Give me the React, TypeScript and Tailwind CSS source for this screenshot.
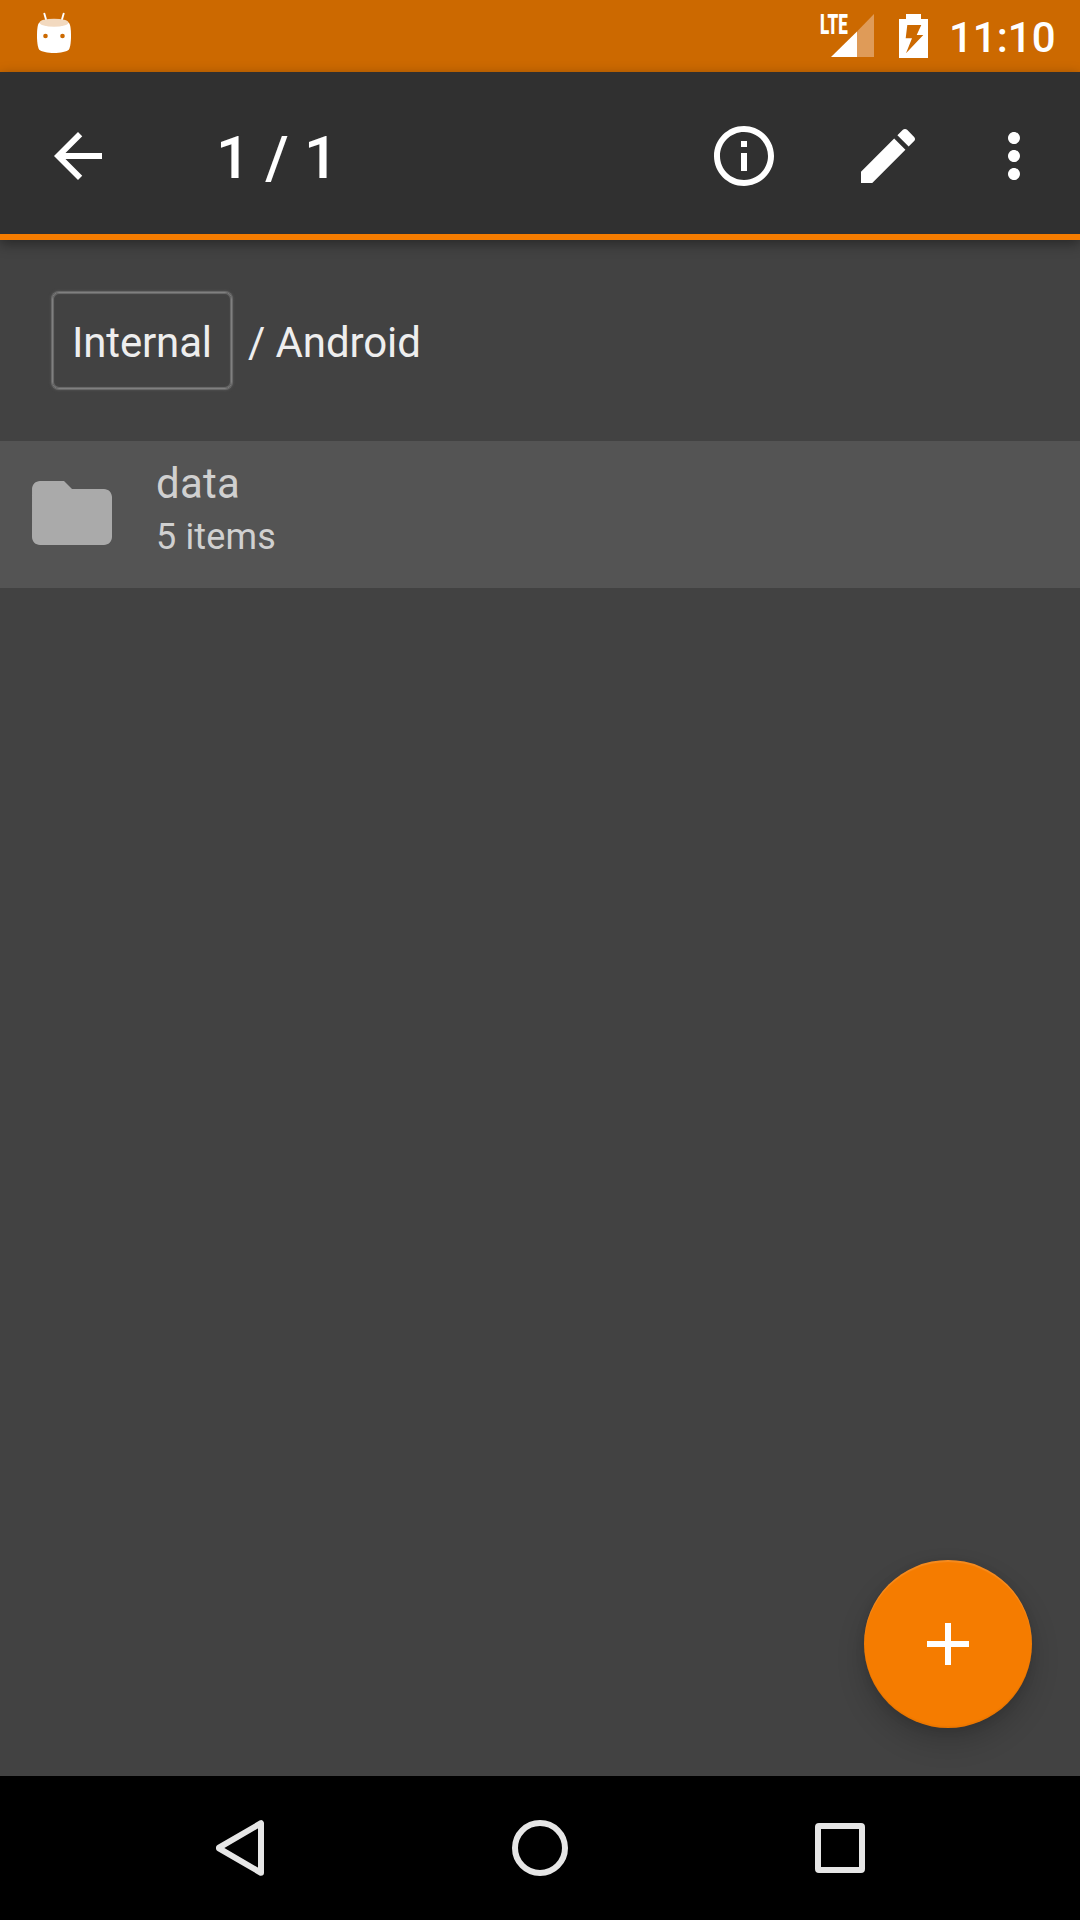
import React from 'react';

function StatusBar() {
  return (
    <div className="flex h-[72px] items-start justify-between bg-[#cc6900]">
      <svg className="ml-9 h-[72px] w-9" viewBox="36 0 36 72" fill="none">
        <path d="M44.3 13.6 46.6 21.5M63.7 13.6 61.4 21.5" stroke="#fff" strokeWidth="1.9" strokeLinecap="round" />
        <path d="M39.5 22.5C37.3 24 37 31 37 36C37 41 37.6 47 39 49.3C40.8 52 48 53 54 53C60 53 67.2 52 69 49.3C70.4 47 71 41 71 36C71 31 70.7 24 68.5 22.5Z" fill="#fff" />
        <ellipse cx="54" cy="22.7" rx="14.4" ry="4" fill="#f2d9bf" />
        <circle cx="45.5" cy="36" r="2.3" fill="#cc6900" />
        <circle cx="62.5" cy="36" r="2.3" fill="#cc6900" />
      </svg>
      <div className="flex h-[72px] pr-6">
        <span className="mt-3 -ml-px mr-px block h-[27px] w-[10px] origin-left scale-x-[0.63] whitespace-nowrap text-[27px] leading-[27px] font-black text-white">LTE</span>
        <svg className="h-[72px] w-11" viewBox="831 0 44 72">
          <path d="M857 57V31.5L874 14V57Z" fill="#df9b58" />
          <path d="M831 57 857 31.5V57Z" fill="#fff" />
        </svg>
        <svg className="ml-6 h-[72px] w-[29px]" viewBox="899 0 29 72">
          <path d="M906 14h15v5h7v39h-29V19h7ZM907.3 25l-1.6 13.3h6.3L906 53.3l17.3-18.3h-6.6l4.6-10Z" fill="#fff" fillRule="evenodd" />
        </svg>
        <span className="mt-[13px] ml-[21px] block h-[49px] w-[107px] whitespace-nowrap text-[42px] leading-[49px] font-medium text-white">11:10</span>
      </div>
    </div>
  );
}

function Icon({ d, className }: { d: string; className: string }) {
  return (
    <svg viewBox="0 0 24 24" fill="currentColor" className={className}>
      <path d={d} />
    </svg>
  );
}

function Toolbar() {
  return (
    <div className="relative z-10 flex h-[168px] items-center border-b-[6px] border-[#f57c00] bg-[#303030] pt-1.5 pr-[30px] pl-[42px] text-white shadow-[0_4px_12px_rgba(0,0,0,0.4)]">
      <Icon className="size-[72px]" d="M20 11H7.83l5.59-5.59L12 4l-8 8 8 8 1.41-1.41L7.83 13H20v-2z" />
      <span className="ml-[102px] block flex-1 pt-[3px] text-[60px] leading-[70px] font-medium tracking-[0.15px]">1 / 1</span>
      <Icon className="size-[72px]" d="M11 17h2v-6h-2v6zm1-15C6.48 2 2 6.48 2 12s4.48 10 10 10 10-4.48 10-10S17.52 2 12 2zm0 18c-4.41 0-8-3.59-8-8s3.59-8 8-8 8 3.59 8 8-3.59 8-8 8zM11 9h2V7h-2v2z" />
      <Icon className="ml-[72px] size-[72px]" d="M3 17.25V21h3.75L17.81 9.94l-3.75-3.75L3 17.25zM20.71 7.04c.39-.39.39-1.02 0-1.41l-2.34-2.34c-.39-.39-1.02-.39-1.41 0l-1.83 1.83 3.75 3.75 1.83-1.83z" />
      <Icon className="ml-[54px] size-[72px]" d="M12 8c1.1 0 2-.9 2-2s-.9-2-2-2-2 .9-2 2 .9 2 2 2zm0 2c-1.1 0-2 .9-2 2s.9 2 2 2 2-.9 2-2-.9-2-2-2zm0 6c-1.1 0-2 .9-2 2s.9 2 2 2 2-.9 2-2-.9-2-2-2z" />
    </div>
  );
}

function Breadcrumbs() {
  return (
    <div className="flex h-[201px] items-start pt-[52px] pl-[52px] text-[42px] leading-[49px] text-[#eeeeee]">
      <div className="flex h-[97px] w-[180px] items-start rounded-[7px] border border-[#808080] pt-[25px] pl-[19px] tracking-[-0.15px] shadow-[0_0_0_1px_#686868,0_0_3px_1px_#5a5a5a,inset_0_0_0_1px_#686868,inset_0_0_2px_1px_#505050]">Internal</div>
      <span className="ml-4 pt-[26px] tracking-[-0.1px] whitespace-pre">/ Android</span>
    </div>
  );
}

function FolderRow() {
  return (
    <div className="flex h-[147px] items-start bg-[#545454] pl-6 text-[#d0d0d0]">
      <Icon className="mt-6 size-24 text-[#aaaaaa]" d="M10 4H4c-1.1 0-1.99.9-1.99 2L2 18c0 1.1.9 2 2 2h16c1.1 0 2-.9 2-2V8c0-1.1-.9-2-2-2h-8l-2-2z" />
      <div className="ml-9 flex flex-col gap-2 pt-[18px]">
        <span className="text-[42px] leading-[49px] tracking-[0.25px]">data</span>
        <span className="text-[36px] leading-[42px] tracking-[0.15px]">5 items</span>
      </div>
    </div>
  );
}

function NavBar() {
  return (
    <div className="flex h-[144px] items-center justify-center gap-[240px] bg-black">
      <svg className="size-[60px]" viewBox="0 0 60 60" fill="none" stroke="#e6e6e6" strokeWidth="6">
        <path d="M51 5.2V54.8L9 30.4V29.6Z" strokeLinejoin="round" />
      </svg>
      <svg className="size-[60px]" viewBox="0 0 60 60" fill="none" stroke="#e6e6e6" strokeWidth="6">
        <circle cx="30" cy="30" r="25" />
      </svg>
      <svg className="size-[60px]" viewBox="0 0 60 60" fill="#e6e6e6" fillRule="evenodd">
        <path d="M9 5H51a4 4 0 0 1 4 4V51a4 4 0 0 1-4 4H9a4 4 0 0 1-4-4V9a4 4 0 0 1 4-4ZM11 11V49H49V11Z" />
      </svg>
    </div>
  );
}

export default function App() {
  return (
    <div className="flex h-[1920px] w-[1080px] flex-col overflow-hidden bg-[#424242] font-['Roboto',sans-serif]">
      <StatusBar />
      <Toolbar />
      <div className="relative flex flex-1 flex-col">
        <Breadcrumbs />
        <FolderRow />
        <button className="absolute right-12 bottom-12 flex size-[168px] items-center justify-center rounded-full bg-[#f57c00] text-white shadow-[0_14px_28px_rgba(0,0,0,0.18),0_2px_10px_rgba(0,0,0,0.1),inset_0_2px_1px_rgba(255,255,255,0.12),inset_0_-2px_1px_rgba(0,0,0,0.04)]">
          <Icon className="size-[72px]" d="M19 13h-6v6h-2v-6H5v-2h6V5h2v6h6v2z" />
        </button>
      </div>
      <NavBar />
    </div>
  );
}
